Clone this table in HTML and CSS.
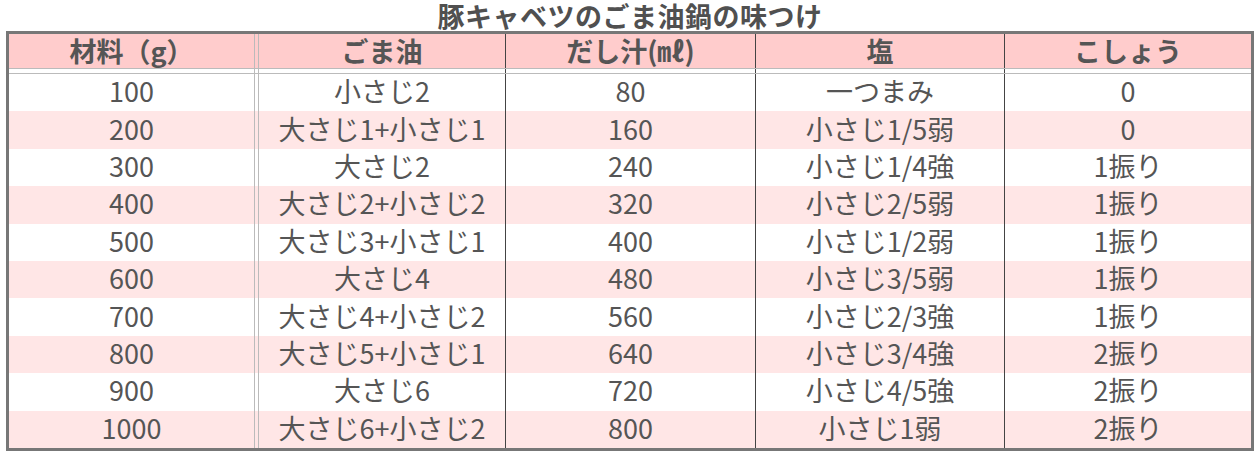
FILE: index.html
```html
<!DOCTYPE html>
<html lang="ja">
<head>
<meta charset="utf-8">
<link rel="stylesheet" href="styles.css">
</head>
<body>
<h1 class="title">豚キャベツのごま油鍋の味つけ</h1>
<div class="table">
  <div class="row head">
    <div class="c c1">材料（g）</div>
    <div class="c c2">ごま油</div>
    <div class="c c3">だし汁(㎖)</div>
    <div class="c c4">塩</div>
    <div class="c c5">こしょう</div>
  </div>
  <div class="row divider">
    <div class="c c1"></div><div class="c c2"></div><div class="c c3"></div><div class="c c4"></div><div class="c c5"></div>
  </div>
  <div class="row"><div class="c c1">100</div><div class="c c2">小さじ2</div><div class="c c3">80</div><div class="c c4">一つまみ</div><div class="c c5">0</div></div>
  <div class="row alt"><div class="c c1">200</div><div class="c c2">大さじ1+小さじ1</div><div class="c c3">160</div><div class="c c4">小さじ1/5弱</div><div class="c c5">0</div></div>
  <div class="row"><div class="c c1">300</div><div class="c c2">大さじ2</div><div class="c c3">240</div><div class="c c4">小さじ1/4強</div><div class="c c5">1振り</div></div>
  <div class="row alt"><div class="c c1">400</div><div class="c c2">大さじ2+小さじ2</div><div class="c c3">320</div><div class="c c4">小さじ2/5弱</div><div class="c c5">1振り</div></div>
  <div class="row"><div class="c c1">500</div><div class="c c2">大さじ3+小さじ1</div><div class="c c3">400</div><div class="c c4">小さじ1/2弱</div><div class="c c5">1振り</div></div>
  <div class="row alt"><div class="c c1">600</div><div class="c c2">大さじ4</div><div class="c c3">480</div><div class="c c4">小さじ3/5弱</div><div class="c c5">1振り</div></div>
  <div class="row"><div class="c c1">700</div><div class="c c2">大さじ4+小さじ2</div><div class="c c3">560</div><div class="c c4">小さじ2/3強</div><div class="c c5">1振り</div></div>
  <div class="row alt"><div class="c c1">800</div><div class="c c2">大さじ5+小さじ1</div><div class="c c3">640</div><div class="c c4">小さじ3/4強</div><div class="c c5">2振り</div></div>
  <div class="row"><div class="c c1">900</div><div class="c c2">大さじ6</div><div class="c c3">720</div><div class="c c4">小さじ4/5強</div><div class="c c5">2振り</div></div>
  <div class="row alt"><div class="c c1">1000</div><div class="c c2">大さじ6+小さじ2</div><div class="c c3">800</div><div class="c c4">小さじ1弱</div><div class="c c5">2振り</div></div>
</div>
</body>
</html>
```
FILE: styles.css
```css
* { box-sizing: border-box; }
html, body { margin: 0; padding: 0; background: #fff; }
body {
  font-family: "Noto Sans CJK JP", "Noto Sans", sans-serif;
  color: #555;
}
.title {
  margin: 0;
  padding-top: 1px;
  height: 31px;
  line-height: 29px;
  text-align: center;
  font-size: 27px;
  font-weight: bold;
  color: #505050;
  letter-spacing: 0.5px;
}
.table {
  width: 1248px;
  margin-left: 6px;
  border: 3px solid #777;
}
.row {
  display: grid;
  grid-template-columns: 249px 248px 250px 249px 246px;
  height: 37.4px;
  background: #fff;
  font-size: 27px;
}
.row.alt { background: #ffe6e6; }
.row.head {
  height: 34px;
  background: #ffcccc;
  font-weight: bold;
  font-size: 27px;
}
.row.divider {
  height: 6px;
  border-top: 1px solid #bbb;
  border-bottom: 1px solid #bbb;
  background: #fff;
}
.c {
  display: flex;
  align-items: center;
  justify-content: center;
  white-space: nowrap;
  line-height: 1;
  padding-bottom: 4px;
}
.head .c { padding-bottom: 2px; }
.divider .c { padding: 0; }
.c1 { border-right: 1px solid #bbb; margin-right: 3px; }
.c2 { border-left: 1px solid #bbb; border-right: 1px solid #444; }
.c3 { border-right: 1px solid #444; }
.c4 { border-right: 1px solid #444; }
```
